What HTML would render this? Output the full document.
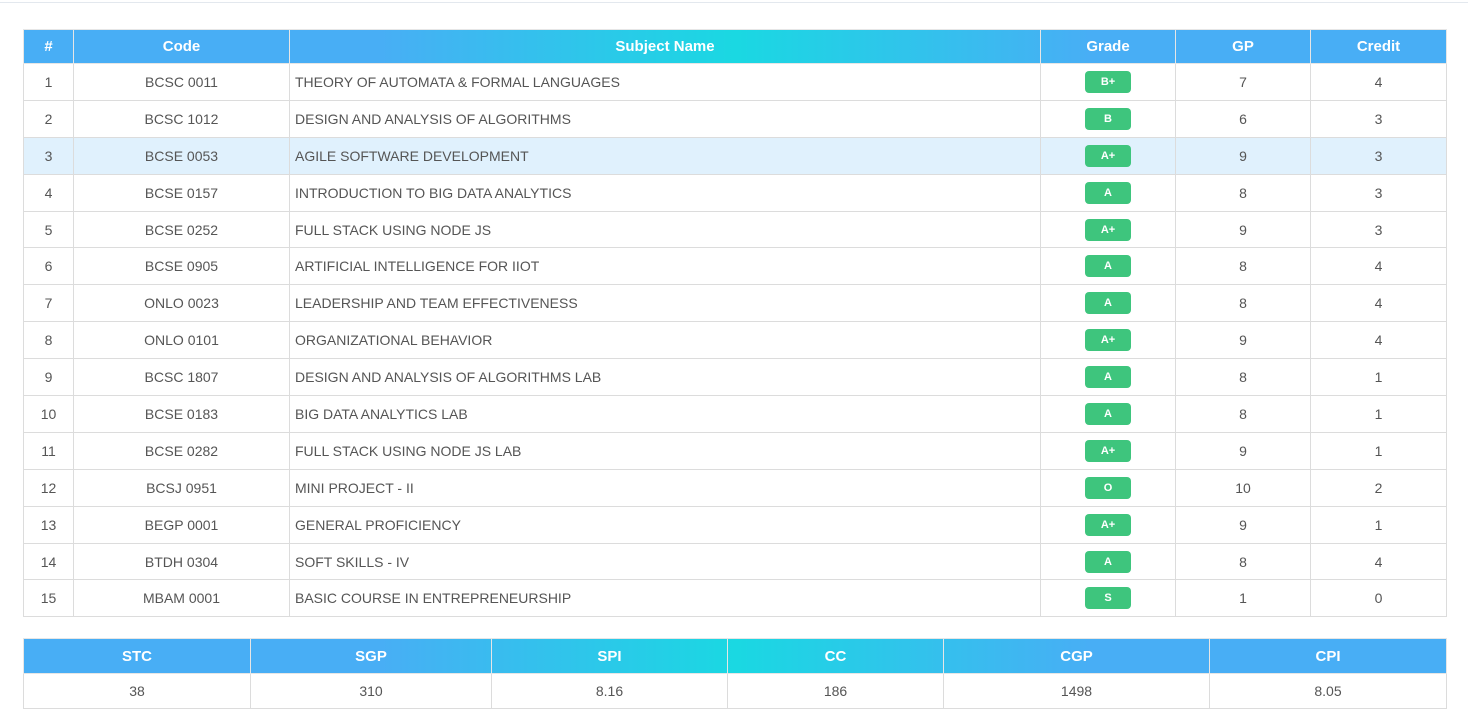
<!DOCTYPE html>
<html><head><style>
body{margin:0;background:#fff;font-family:"Liberation Sans",sans-serif;width:1468px;height:722px;overflow:hidden;position:relative}
.top{position:absolute;left:0;top:2px;width:1468px;height:1px;background:#e3e8ee}
table{position:absolute;left:23px;border-collapse:collapse;table-layout:fixed;font-size:14px;color:#555}
td,th{border:1px solid #dcdcdc;text-align:center;padding:0;white-space:nowrap;overflow:hidden}
th{color:#fff;font-weight:bold;border-color:#e6e6e6;font-size:15px}
thead tr{background:linear-gradient(90deg,#48aef5 0%,#48aef5 25%,#1ad8e2 50%,#48aef5 75%,#48aef5 100%)}
#t1{top:29px;width:1423px}
#t1 th{height:33px}
#t1 td{height:35.9px}
td.l{text-align:left;padding-left:5px}
.b{display:inline-block;width:46px;height:22px;line-height:22px;border-radius:4px;background:#3ec57d;color:#fff;font-weight:bold;font-size:11px;vertical-align:middle}
tr.h td{background:#e0f1fd}
#t2{top:638px;width:1423px}
#t2 th{height:34px}
#t2 td{height:34px}
</style></head><body>
<div class="top"></div>
<table id="t1">
<colgroup><col style="width:50px"><col style="width:216px"><col style="width:751px"><col style="width:135px"><col style="width:135px"><col style="width:136px"></colgroup>
<thead><tr><th>#</th><th>Code</th><th>Subject Name</th><th>Grade</th><th>GP</th><th>Credit</th></tr></thead>
<tbody>
<tr><td>1</td><td>BCSC 0011</td><td class="l">THEORY OF AUTOMATA &amp; FORMAL LANGUAGES</td><td><span class="b">B+</span></td><td>7</td><td>4</td></tr>
<tr><td>2</td><td>BCSC 1012</td><td class="l">DESIGN AND ANALYSIS OF ALGORITHMS</td><td><span class="b">B</span></td><td>6</td><td>3</td></tr>
<tr class="h"><td>3</td><td>BCSE 0053</td><td class="l">AGILE SOFTWARE DEVELOPMENT</td><td><span class="b">A+</span></td><td>9</td><td>3</td></tr>
<tr><td>4</td><td>BCSE 0157</td><td class="l">INTRODUCTION TO BIG DATA ANALYTICS</td><td><span class="b">A</span></td><td>8</td><td>3</td></tr>
<tr><td>5</td><td>BCSE 0252</td><td class="l">FULL STACK USING NODE JS</td><td><span class="b">A+</span></td><td>9</td><td>3</td></tr>
<tr><td>6</td><td>BCSE 0905</td><td class="l">ARTIFICIAL INTELLIGENCE FOR IIOT</td><td><span class="b">A</span></td><td>8</td><td>4</td></tr>
<tr><td>7</td><td>ONLO 0023</td><td class="l">LEADERSHIP AND TEAM EFFECTIVENESS</td><td><span class="b">A</span></td><td>8</td><td>4</td></tr>
<tr><td>8</td><td>ONLO 0101</td><td class="l">ORGANIZATIONAL BEHAVIOR</td><td><span class="b">A+</span></td><td>9</td><td>4</td></tr>
<tr><td>9</td><td>BCSC 1807</td><td class="l">DESIGN AND ANALYSIS OF ALGORITHMS LAB</td><td><span class="b">A</span></td><td>8</td><td>1</td></tr>
<tr><td>10</td><td>BCSE 0183</td><td class="l">BIG DATA ANALYTICS LAB</td><td><span class="b">A</span></td><td>8</td><td>1</td></tr>
<tr><td>11</td><td>BCSE 0282</td><td class="l">FULL STACK USING NODE JS LAB</td><td><span class="b">A+</span></td><td>9</td><td>1</td></tr>
<tr><td>12</td><td>BCSJ 0951</td><td class="l">MINI PROJECT - II</td><td><span class="b">O</span></td><td>10</td><td>2</td></tr>
<tr><td>13</td><td>BEGP 0001</td><td class="l">GENERAL PROFICIENCY</td><td><span class="b">A+</span></td><td>9</td><td>1</td></tr>
<tr><td>14</td><td>BTDH 0304</td><td class="l">SOFT SKILLS - IV</td><td><span class="b">A</span></td><td>8</td><td>4</td></tr>
<tr><td>15</td><td>MBAM 0001</td><td class="l">BASIC COURSE IN ENTREPRENEURSHIP</td><td><span class="b">S</span></td><td>1</td><td>0</td></tr>
</tbody></table>
<table id="t2">
<colgroup><col style="width:227px"><col style="width:241px"><col style="width:236px"><col style="width:216px"><col style="width:266px"><col style="width:237px"></colgroup>
<thead><tr><th>STC</th><th>SGP</th><th>SPI</th><th>CC</th><th>CGP</th><th>CPI</th></tr></thead>
<tbody><tr><td>38</td><td>310</td><td>8.16</td><td>186</td><td>1498</td><td>8.05</td></tr></tbody>
</table>
</body></html>
